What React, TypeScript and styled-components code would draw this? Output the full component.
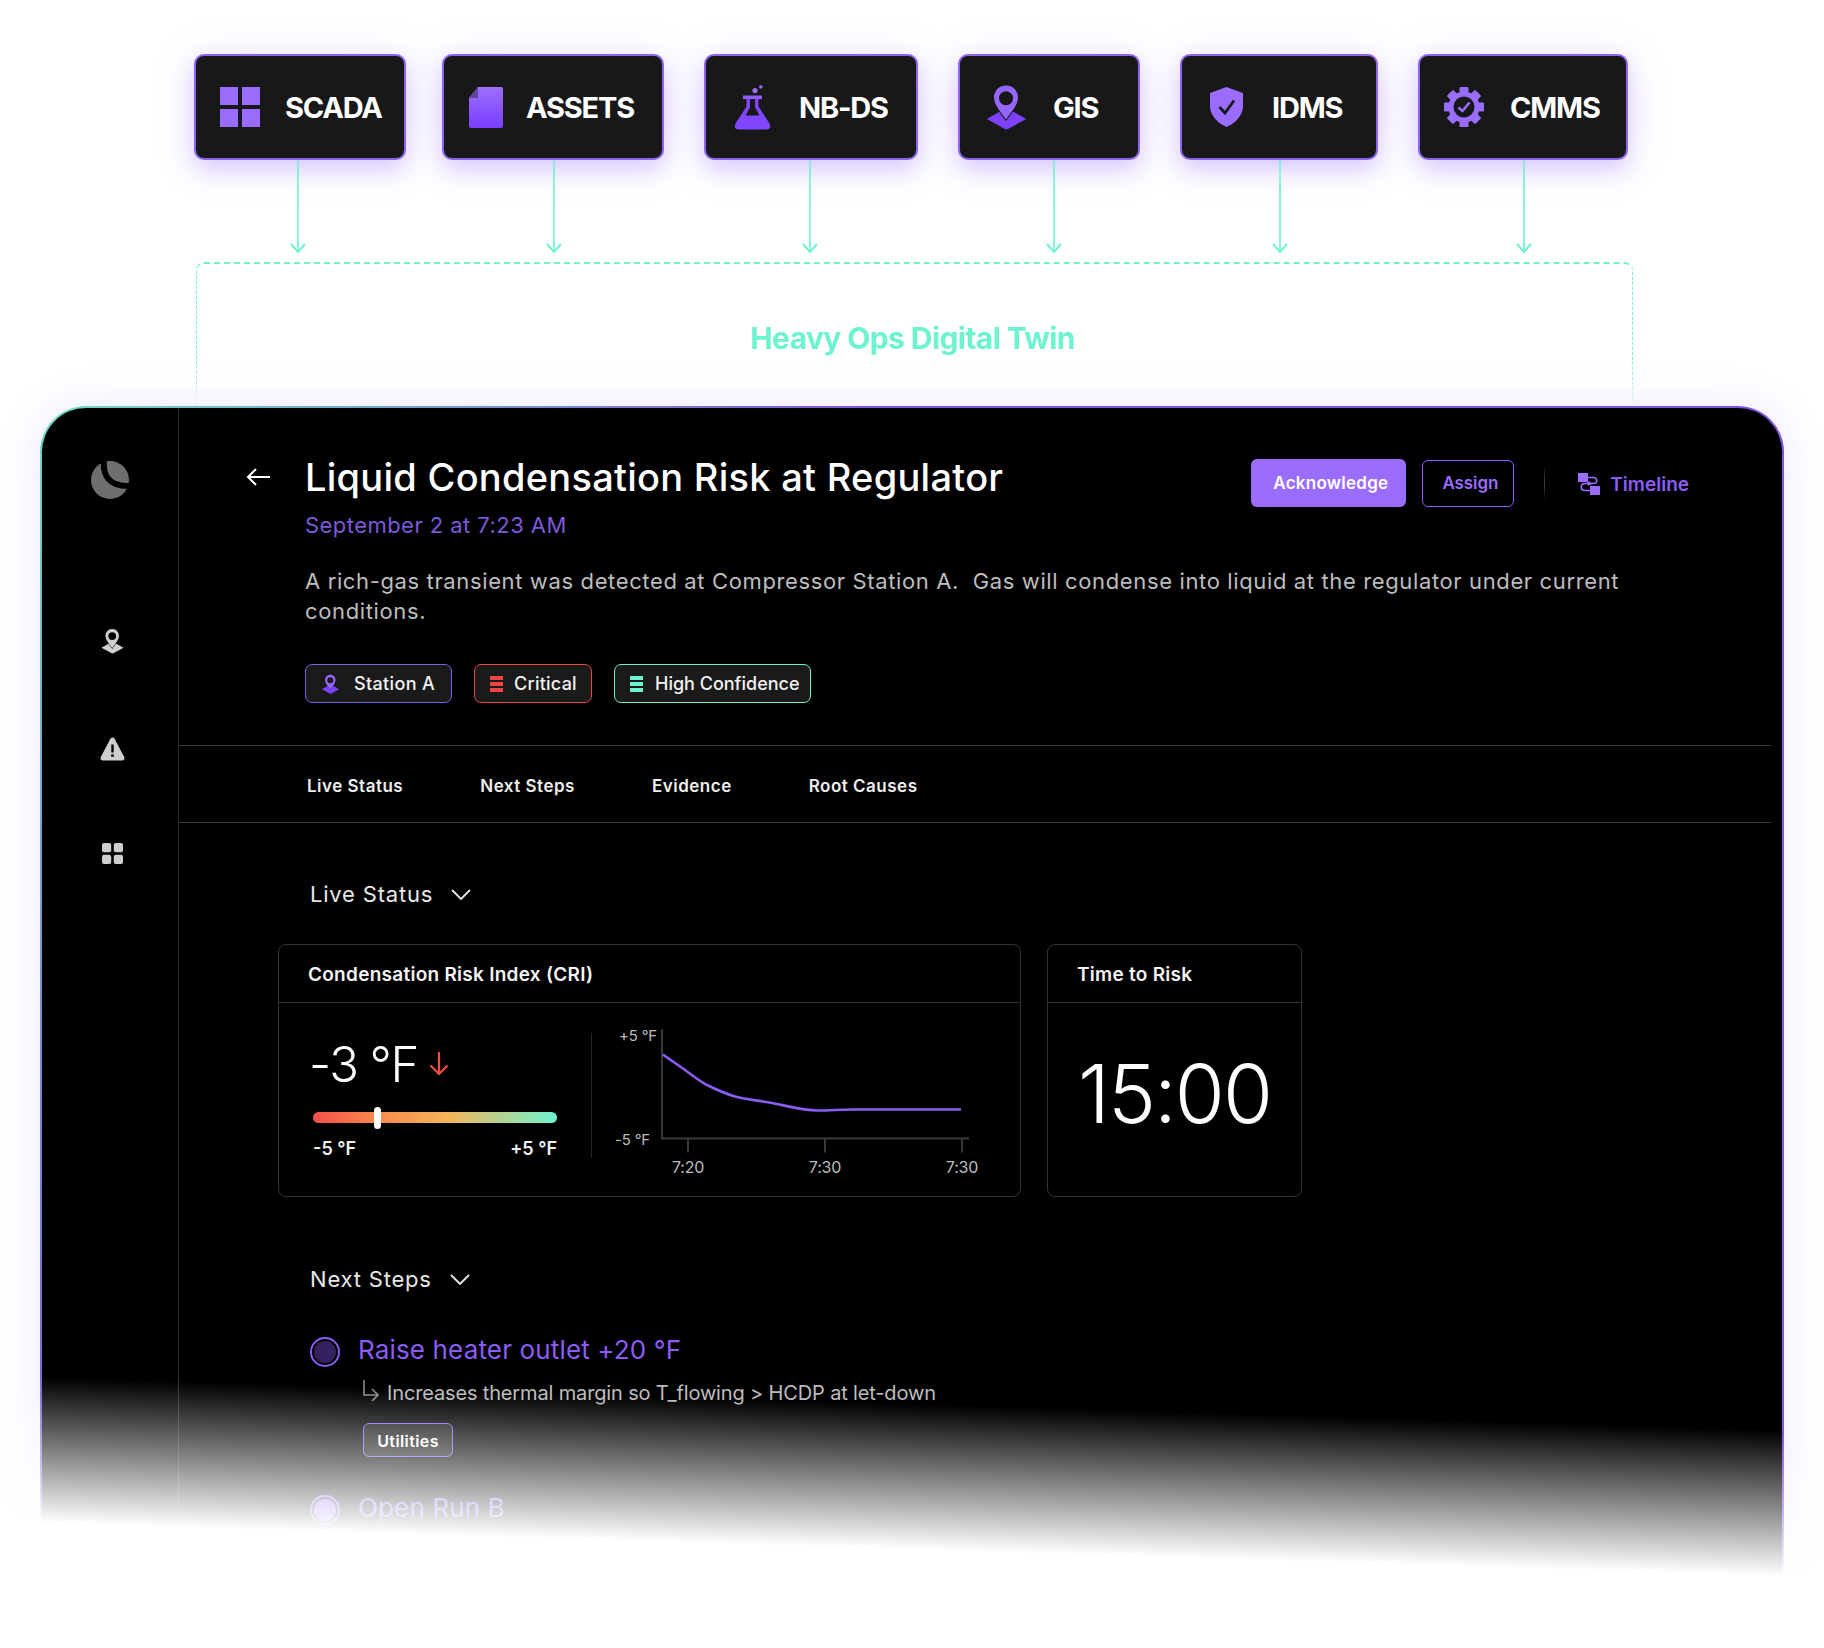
import React from "react";
import styled, { createGlobalStyle } from "styled-components";

const Global = createGlobalStyle`
  html, body { margin: 0; padding: 0; background: #fff; }
  * { box-sizing: border-box; }
  body { font-family: Inter, "Noto Sans", sans-serif; }
`;

const Page = styled.div`
  position: relative;
  width: 1824px;
  height: 1648px;
  overflow: hidden;
  background: #fff;
  padding-top: 54px;
`;

const SourceRow = styled.div`
  display: flex;
  padding-left: 194px;
  height: 106px;
`;

const SourceCard = styled.div<{ $w: number; $ml: number; $pad: number }>`
  width: ${(p) => p.$w}px;
  margin-left: ${(p) => p.$ml}px;
  padding-left: ${(p) => p.$pad - 2}px;
  height: 106px;
  display: flex;
  align-items: center;
  background: #181818;
  border: 2px solid #8f63f5;
  border-radius: 10px;
  box-shadow: 0 10px 22px rgba(139, 92, 246, 0.26), 0 4px 46px rgba(139, 92, 246, 0.14);
`;

const SourceIcon = styled.svg<{ $gap: number }>`
  flex: none;
  margin-right: ${(p) => p.$gap}px;
`;

const SourceLabel = styled.span`
  color: #fff;
  font-size: 29px;
  font-weight: 700;
  letter-spacing: -1.2px;
  line-height: 36px;
  padding-top: 2px;
  white-space: nowrap;
`;

const Connectors = styled.svg`
  display: block;
`;

const TwinFrame = styled.div`
  margin: 9px 0 0 196px;
  width: 1437px;
  height: 152px;
  border-top: 2px dashed #6ef3d0;
  border-left: 1.5px dashed #6ef3d0;
  border-right: 1.5px dashed #6ef3d0;
  border-radius: 8px 8px 0 0;
  text-align: center;
  padding: 55px 4px 0 0;
  mask-image: linear-gradient(#000 64%, transparent);
`;

const TwinTitle = styled.div`
  color: #6ef3d0;
  font-size: 30px;
  font-weight: 700;
  letter-spacing: -0.6px;
  line-height: 38px;
`;

const Panel = styled.div`
  position: relative;
  width: 1744px;
  height: 1200px;
  margin: -8px 0 0 40px;
  padding: 2px;
  border-radius: 46px;
  background: linear-gradient(127deg, #6fdcc4 0%, #7e57d8 31%);
  box-shadow: 0 0 44px rgba(139, 92, 246, 0.16);
`;

const PanelInner = styled.div`
  display: flex;
  height: 100%;
  background: #000;
  border-radius: 44px;
  overflow: hidden;
`;

const Sidebar = styled.aside`
  flex: none;
  width: 137px;
  border-right: 1px solid #2b2b2b;
  padding-top: 53px;
  display: flex;
  flex-direction: column;
  align-items: center;
`;

const SideIcon = styled.svg<{ $mt: number; $shift?: number }>`
  display: block;
  flex: none;
  margin-top: ${(p) => p.$mt}px;
  margin-left: ${(p) => p.$shift ?? 0}px;
`;

const Main = styled.main`
  flex: 1;
  min-width: 0;
`;

const Header = styled.header`
  padding: 45px 93px 42px 67px;
`;

const HeaderTop = styled.div`
  display: flex;
  align-items: flex-start;
`;

const BackIcon = styled.svg`
  flex: none;
  width: 24px;
  height: 18px;
  margin: 15px 35px 0 0;
`;

const TitleBlock = styled.div`
  flex: 1;
`;

const Title = styled.h1`
  margin: 0;
  color: #fff;
  font-size: 38px;
  font-weight: 500;
  letter-spacing: 0.27px;
  line-height: 48px;
`;

const DateLine = styled.div`
  margin-top: 10px;
  color: #7b59d9;
  font-size: 22px;
  line-height: 28px;
  letter-spacing: 0.45px;
`;

const Actions = styled.div`
  display: flex;
  align-items: center;
  margin-top: 6px;
`;

const PrimaryButton = styled.button`
  width: 155px;
  height: 48px;
  margin-right: 16px;
  padding: 0 0 0 4px;
  border: 0;
  border-radius: 6px;
  background: #9b6dff;
  color: #fff;
  font: 600 17px Inter, sans-serif;
  letter-spacing: 0.25px;
`;

const GhostButton = styled.button`
  width: 92px;
  height: 47px;
  padding: 0 0 0 4px;
  border: 1.5px solid #8b5cf6;
  border-radius: 6px;
  background: transparent;
  color: #9b6dff;
  font: 600 17px Inter, sans-serif;
  letter-spacing: -0.1px;
`;

const VDivider = styled.span`
  width: 1px;
  height: 36px;
  margin: 0 33px 0 30px;
  background: linear-gradient(transparent, #444 50%, transparent);
`;

const TimelineLink = styled.span`
  display: flex;
  align-items: center;
  gap: 10px;
  padding-top: 2px;
  color: #8b5cf6;
  font-size: 19px;
  font-weight: 600;
  letter-spacing: 0;
`;

const Description = styled.p`
  margin: 27px 0 0 59px;
  width: 1330px;
  color: #bdbdbd;
  font-size: 22px;
  line-height: 30px;
  letter-spacing: 0.63px;
`;

const TagRow = styled.div`
  display: flex;
  margin: 38px 0 0 59px;
  gap: 22px;
`;

const Tag = styled.div<{ $color: string; $w: number; $pad: number; $gap: number; $ls: number }>`
  display: flex;
  align-items: center;
  width: ${(p) => p.$w}px;
  height: 39px;
  padding-left: ${(p) => p.$pad}px;
  gap: ${(p) => p.$gap}px;
  background: #1a1a1a;
  border: 1.5px solid ${(p) => p.$color};
  border-radius: 7px;
  color: #f2f2f2;
  font-size: 18px;
  font-weight: 500;
  letter-spacing: ${(p) => p.$ls}px;
`;

const Bars = styled.div<{ $color: string }>`
  flex: none;
  width: 13px;
  height: 16px;
  background: repeating-linear-gradient(${(p) => p.$color} 0 4px, transparent 4px 6px);
`;

const Tabs = styled.nav`
  display: flex;
  align-items: center;
  height: 78px;
  margin-right: 10px;
  padding: 3px 0 0 128px;
  gap: 77px;
  border-top: 1px solid #333;
  border-bottom: 1px solid #333;
`;

const TabLabel = styled.span`
  color: #eee;
  font-size: 17px;
  font-weight: 600;
  letter-spacing: 0.5px;
`;

const Content = styled.section`
  padding-left: 99px;
`;

const SectionHead = styled.div<{ $mt: number }>`
  display: flex;
  align-items: center;
  gap: 18px;
  margin: ${(p) => p.$mt}px 0 0 32px;
  height: 28px;
  color: #e8e8e8;
  font-size: 22px;
  letter-spacing: 0.8px;
`;

const CardRow = styled.div`
  display: flex;
  gap: 26px;
  margin-top: 36px;
`;

const Card = styled.div<{ $w: number }>`
  width: ${(p) => p.$w}px;
  height: 253px;
  border: 1.5px solid #333;
  border-radius: 8px;
`;

const CardHead = styled.div`
  height: 58px;
  padding: 2px 29px 0;
  display: flex;
  align-items: center;
  border-bottom: 1.5px solid #333;
  color: #f4f4f4;
  font-size: 19px;
  font-weight: 600;
  letter-spacing: 0.27px;
`;

const CardBody = styled.div`
  display: flex;
  position: relative;
  height: 193px;
`;

const GaugeColumn = styled.div`
  width: 313px;
  flex: none;
  padding: 31px 0 0 34px;
  position: relative;
`;

const GaugeDivider = styled.span`
  position: absolute;
  right: 0;
  top: 30px;
  width: 1px;
  height: 125px;
  background: #262626;
`;

const GaugeValue = styled.div`
  display: flex;
  align-items: center;
  gap: 11px;
  height: 60px;
  margin-left: -4px;
  color: #fff;
  font-size: 49px;
  font-weight: 300;
  letter-spacing: -1.5px;
`;

const Track = styled.div`
  position: relative;
  width: 244px;
  height: 11px;
  margin-top: 18px;
  border-radius: 6px;
  background: linear-gradient(90deg, #f5504a 0%, #f9874c 25%, #f5b458 55%, #6ef3d0 100%);
`;

const Handle = styled.span`
  position: absolute;
  left: 61px;
  top: -5px;
  width: 7px;
  height: 22px;
  border-radius: 4px;
  background: #fff;
`;

const GaugeScale = styled.div`
  display: flex;
  justify-content: space-between;
  width: 244px;
  margin-top: 15px;
  color: #f0f0f0;
  font-size: 18px;
  font-weight: 600;
  letter-spacing: 0;
`;

const Countdown = styled.div`
  height: 193px;
  display: flex;
  align-items: center;
  justify-content: center;
  padding-bottom: 12px;
  color: #fff;
  font-size: 81px;
  font-weight: 300;
  letter-spacing: -2px;
`;

const StepRow = styled.div<{ $mt: number }>`
  display: flex;
  gap: 18px;
  margin: ${(p) => p.$mt}px 0 0 32px;
`;

const Radio = styled.span<{ $fill: string }>`
  flex: none;
  width: 30px;
  height: 30px;
  margin-top: 5px;
  border: 2px solid #8b5cf6;
  border-radius: 50%;
  background: ${(p) => p.$fill};
  background-clip: content-box;
  padding: 2px;
`;

const StepBody = styled.div``;

const StepTitle = styled.div`
  color: #8b5cf6;
  font-size: 26px;
  line-height: 36px;
  letter-spacing: 0.15px;
`;

const StepNote = styled.div`
  display: flex;
  align-items: center;
  gap: 7px;
  margin: 12px 0 0 4px;
  height: 26px;
  color: #bdbdbd;
  font-size: 20px;
  letter-spacing: -0.15px;
  white-space: nowrap;
`;

const NoteArrow = styled.svg`
  flex: none;
  margin-top: -5px;
`;

const OwnerChip = styled.div`
  display: inline-flex;
  align-items: center;
  justify-content: center;
  width: 90px;
  height: 34px;
  margin: 17px 0 0 5px;
  padding-top: 1px;
  background: #1a1a1a;
  border: 1.5px solid #8b5cf6;
  border-radius: 6px;
  color: #fff;
  font-size: 16px;
  font-weight: 600;
  letter-spacing: 0.4px;
`;

const BottomFade = styled.div`
  position: absolute;
  left: 0;
  right: 0;
  top: 1350px;
  bottom: 0;
  background: linear-gradient(181.75deg, rgba(255, 255, 255, 0) 23%, #fff 64.3%);
  pointer-events: none;
`;

const Pin = ({ gap, fill = "#9b6dff", fill2 }: { gap: string; fill?: string; fill2?: string }) => (
  <>
    <path d="M0.8 35 L17.5 25.5 H23.5 L40.2 35 L22 45 Q20.5 45.8 19 45 Z" fill={fill2 ?? fill} />
    <path
      d="M20 1.5C12.2 1.5 8 7.6 8 13.6C8 21 15.2 29 20 35.5C24.8 29 32 21 32 13.6C32 7.6 27.8 1.5 20 1.5ZM20 7.2A7 7 0 1 1 20 21.2A7 7 0 1 1 20 7.2Z"
      fill={fill}
      fillRule="evenodd"
      stroke={gap}
      strokeWidth="2"
      paintOrder="stroke"
    />
  </>
);

const Defs = () => (
  <defs>
    <linearGradient id="vio" x1="0" y1="0" x2="0" y2="1">
      <stop offset="0" stopColor="#9c70ff" />
      <stop offset="1" stopColor="#7a3dff" />
    </linearGradient>
  </defs>
);

const teeth = [0, 45, 90, 135, 180, 225, 270, 315];

const sources = [
  {
    label: "SCADA", w: 212, ml: 0, pad: 26, gap: 25, iw: 40, ih: 40,
    icon: (
      <g fill="#9b6dff">
        <rect width="18" height="18" />
        <rect x="22" width="18" height="18" />
        <rect y="22" width="18" height="18" />
        <rect x="22" y="22" width="18" height="18" />
      </g>
    ),
  },
  {
    label: "ASSETS", w: 222, ml: 36, pad: 27, gap: 23, iw: 34, ih: 41,
    icon: (
      <>
        <Defs />
        <path d="M9 0H32Q34 0 34 2V39Q34 41 32 41H2Q0 41 0 39V11Z" fill="url(#vio)" />
        <path d="M9 0V11H0Z" fill="#5b4a94" />
      </>
    ),
  },
  {
    label: "NB-DS", w: 214, ml: 40, pad: 30, gap: 28, iw: 37, ih: 45,
    icon: (
      <>
        <circle cx="21" cy="5.6" r="2.6" fill="#9b6dff" />
        <circle cx="26.8" cy="2" r="1.8" fill="#9b6dff" />
        <rect x="9" y="10.5" width="19" height="3.6" fill="#8f5cff" />
        <path
          d="M12.5 14V21.5L1.5 38.5Q-1 44.5 5 44.5H32Q38 44.5 35.5 38.5L24.5 21.5V14ZM16 14H21V22.5L25.5 30.5H11.5L16 22.5Z"
          fill="#7f45ff"
          fillRule="evenodd"
        />
      </>
    ),
  },
  {
    label: "GIS", w: 182, ml: 40, pad: 28, gap: 26, iw: 41, ih: 46,
    icon: <Pin gap="#181818" fill="#9566fb" fill2="#7e42ff" />,
  },
  {
    label: "IDMS", w: 198, ml: 40, pad: 30, gap: 29, iw: 33, ih: 40,
    icon: (
      <>
        <path d="M16.5 0L33 6V19C33 29 24.5 36.5 16.5 40C8.5 36.5 0 29 0 19V6Z" fill="#9b6dff" />
        <path d="M9.5 20L15 26L24 13.5" fill="none" stroke="#181818" strokeWidth="2.8" />
      </>
    ),
  },
  {
    label: "CMMS", w: 210, ml: 40, pad: 26, gap: 26, iw: 40, ih: 40,
    icon: (
      <>
        {teeth.map((a) => (
          <rect key={a} x="15.5" y="0" width="9" height="9" rx="1" fill="#9b6dff" transform={`rotate(${a} 20 20)`} />
        ))}
        <circle cx="20" cy="20" r="15.5" fill="#9b6dff" />
        <circle cx="20" cy="20" r="10.5" fill="#181818" />
        <path d="M14.5 20.5L18.5 24L25.5 15.5" fill="none" stroke="#9b6dff" strokeWidth="2.6" />
      </>
    ),
  },
];

const arrowXs = [298, 554, 810, 1054, 1280, 1524];

const Chevron = () => (
  <svg width="20" height="11" viewBox="0 0 20 11">
    <path d="M1 1L10 10L19 1" fill="none" stroke="#e8e8e8" strokeWidth="1.8" />
  </svg>
);

const ChartLabel = styled.text<{ $size: number }>`
  fill: #bdbdbd;
  font-family: Inter, sans-serif;
  font-size: ${(p) => p.$size}px;
  letter-spacing: -0.2px;
`;

const Chart = () => (
  <svg width="400" height="193" viewBox="-2 -2.5 400 193">
    <g fill="none">
      <path d="M68 24V133H375" stroke="#3a3a3a" strokeWidth="2" />
      <path d="M94 133V147M231 133V147M368 133V147" stroke="#3a3a3a" strokeWidth="2" />
      <path
        d="M69 49C77 55 85 60 93 66C100 71 105 75 112 79C122 84 131 88 141 91C152 94 164 95 175 97C192 100 208 105 224 105C236 105 246 104 258 104L367 104"
        stroke="#8b5cf6"
        strokeWidth="2.6"
      />
    </g>
    <ChartLabel $size={15} x="25" y="35">+5 °F</ChartLabel>
    <ChartLabel $size={15} x="21" y="139">-5 °F</ChartLabel>
    <ChartLabel $size={16} x="94" y="167" textAnchor="middle">7:20</ChartLabel>
    <ChartLabel $size={16} x="231" y="167" textAnchor="middle">7:30</ChartLabel>
    <ChartLabel $size={16} x="368" y="167" textAnchor="middle">7:30</ChartLabel>
  </svg>
);

export default function App() {
  return (
    <Page>
      <Global />
      <SourceRow>
        {sources.map((s) => (
          <SourceCard key={s.label} $w={s.w} $ml={s.ml} $pad={s.pad}>
            <SourceIcon $gap={s.gap} width={s.iw} height={s.ih} viewBox={`0 0 ${s.iw} ${s.ih}`}>
              {s.icon}
            </SourceIcon>
            <SourceLabel>{s.label}</SourceLabel>
          </SourceCard>
        ))}
      </SourceRow>
      <Connectors width="1824" height="93" viewBox="0 0 1824 93">
        {arrowXs.map((x) => (
          <g key={x} fill="none" stroke="#6ef3d0" strokeWidth="1.6">
            <path d={`M${x} 0V92`} />
            <path d={`M${x - 7} 84L${x} 92L${x + 7} 84`} strokeWidth="2" />
          </g>
        ))}
      </Connectors>
      <TwinFrame>
        <TwinTitle>Heavy Ops Digital Twin</TwinTitle>
      </TwinFrame>
      <Panel>
        <PanelInner>
          <Sidebar>
            <SideIcon $mt={0} width="38" height="38" viewBox="0 0 38 38">
              <circle cx="19" cy="19" r="19" fill="#6e6e6e" />
              <path d="M13 -2C11.5 14 17 26 40 25" fill="none" stroke="#000" strokeWidth="6" />
            </SideIcon>
            <SideIcon $mt={129} $shift={4} width="23" height="26" viewBox="0 0 41 46">
              <Pin gap="#000" fill="#cfcfcf" />
            </SideIcon>
            <SideIcon $mt={83} $shift={4} width="25" height="24" viewBox="0 0 25 24">
              <path
                d="M12.5 0.5C13.6 0.5 14.4 1.2 15 2.4L24.2 20C25 21.8 24 23.5 22 23.5H3C1 23.5 0 21.8 0.8 20L10 2.4C10.6 1.2 11.4 0.5 12.5 0.5Z"
                fill="#cfcfcf"
              />
              <rect x="11.3" y="7.5" width="2.4" height="8" fill="#000" />
              <circle cx="12.5" cy="18.6" r="1.5" fill="#000" />
            </SideIcon>
            <SideIcon $mt={82} $shift={4} width="21" height="21" viewBox="0 0 21 21">
              <g fill="#cfcfcf">
                <rect width="9.2" height="9.2" rx="2" />
                <rect x="11.8" width="9.2" height="9.2" rx="2" />
                <rect y="11.8" width="9.2" height="9.2" rx="2" />
                <rect x="11.8" y="11.8" width="9.2" height="9.2" rx="2" />
              </g>
            </SideIcon>
          </Sidebar>
          <Main>
            <Header>
              <HeaderTop>
                <BackIcon viewBox="0 0 24 18">
                  <path d="M24 9H2M10 1L2 9L10 17" fill="none" stroke="#fff" strokeWidth="2" />
                </BackIcon>
                <TitleBlock>
                  <Title>Liquid Condensation Risk at Regulator</Title>
                  <DateLine>September 2 at 7:23 AM</DateLine>
                </TitleBlock>
                <Actions>
                  <PrimaryButton>Acknowledge</PrimaryButton>
                  <GhostButton>Assign</GhostButton>
                  <VDivider />
                  <TimelineLink>
                    <svg width="22" height="22" viewBox="0 0 22 22">
                      <rect width="10" height="9" fill="#9b6dff" />
                      <rect x="12" y="13" width="10" height="9" fill="#9b6dff" />
                      <path d="M10 4.5H15C20 4.5 20 10.5 15 10.5H7C2 10.5 2 17.5 7 17.5H12" fill="none" stroke="#9b6dff" strokeWidth="1.6" />
                      <circle cx="11" cy="10.5" r="2" fill="#9b6dff" />
                    </svg>
                    Timeline
                  </TimelineLink>
                </Actions>
              </HeaderTop>
              <Description>
                A rich-gas transient was detected at Compressor Station A.&nbsp; Gas will condense into liquid at the regulator under current
                <br />
                conditions.
              </Description>
              <TagRow>
                <Tag $color="#7f5be6" $w={147} $pad={15} $gap={14} $ls={0.35}>
                  <svg width="19" height="20" viewBox="0 0 41 46">
                    <Pin gap="#1a1a1a" fill="#9566fb" fill2="#7e42ff" />
                  </svg>
                  Station A
                </Tag>
                <Tag $color="#ef4444" $w={118} $pad={15} $gap={11} $ls={0.25}>
                  <Bars $color="#ef4444" />
                  Critical
                </Tag>
                <Tag $color="#6ef3d0" $w={197} $pad={15} $gap={12} $ls={0}>
                  <Bars $color="#6ef3d0" />
                  High Confidence
                </Tag>
              </TagRow>
            </Header>
            <Tabs>
              <TabLabel>Live Status</TabLabel>
              <TabLabel>Next Steps</TabLabel>
              <TabLabel>Evidence</TabLabel>
              <TabLabel>Root Causes</TabLabel>
            </Tabs>
            <Content>
              <SectionHead $mt={57}>
                Live Status
                <Chevron />
              </SectionHead>
              <CardRow>
                <Card $w={743}>
                  <CardHead>Condensation Risk Index (CRI)</CardHead>
                  <CardBody>
                    <GaugeColumn>
                      <GaugeValue>
                        -3 °F
                        <svg width="20" height="24" viewBox="0 0 20 24">
                          <path d="M10 0V22M1.5 13.5L10 22L18.5 13.5" fill="none" stroke="#ef4f43" strokeWidth="2.2" />
                        </svg>
                      </GaugeValue>
                      <Track>
                        <Handle />
                      </Track>
                      <GaugeScale>
                        <span>-5 °F</span>
                        <span>+5 °F</span>
                      </GaugeScale>
                      <GaugeDivider />
                    </GaugeColumn>
                    <Chart />
                  </CardBody>
                </Card>
                <Card $w={255}>
                  <CardHead>Time to Risk</CardHead>
                  <Countdown>15:00</Countdown>
                </Card>
              </CardRow>
              <SectionHead $mt={68}>
                Next Steps
                <Chevron />
              </SectionHead>
              <StepRow $mt={39}>
                <Radio $fill="#33225f" />
                <StepBody>
                  <StepTitle>Raise heater outlet +20 °F</StepTitle>
                  <StepNote>
                    <NoteArrow width="18" height="21" viewBox="0 0 18 21">
                      <path d="M2 0V15H16M10 9L16 15L10 21" fill="none" stroke="#8a8a8a" strokeWidth="1.6" />
                    </NoteArrow>
                    Increases thermal margin so T_flowing &gt; HCDP at let-down
                  </StepNote>
                  <OwnerChip>Utilities</OwnerChip>
                </StepBody>
              </StepRow>
              <StepRow $mt={33}>
                <Radio $fill="#8b5cf6" />
                <StepBody>
                  <StepTitle>Open Run B</StepTitle>
                </StepBody>
              </StepRow>
            </Content>
          </Main>
        </PanelInner>
      </Panel>
      <BottomFade />
    </Page>
  );
}
